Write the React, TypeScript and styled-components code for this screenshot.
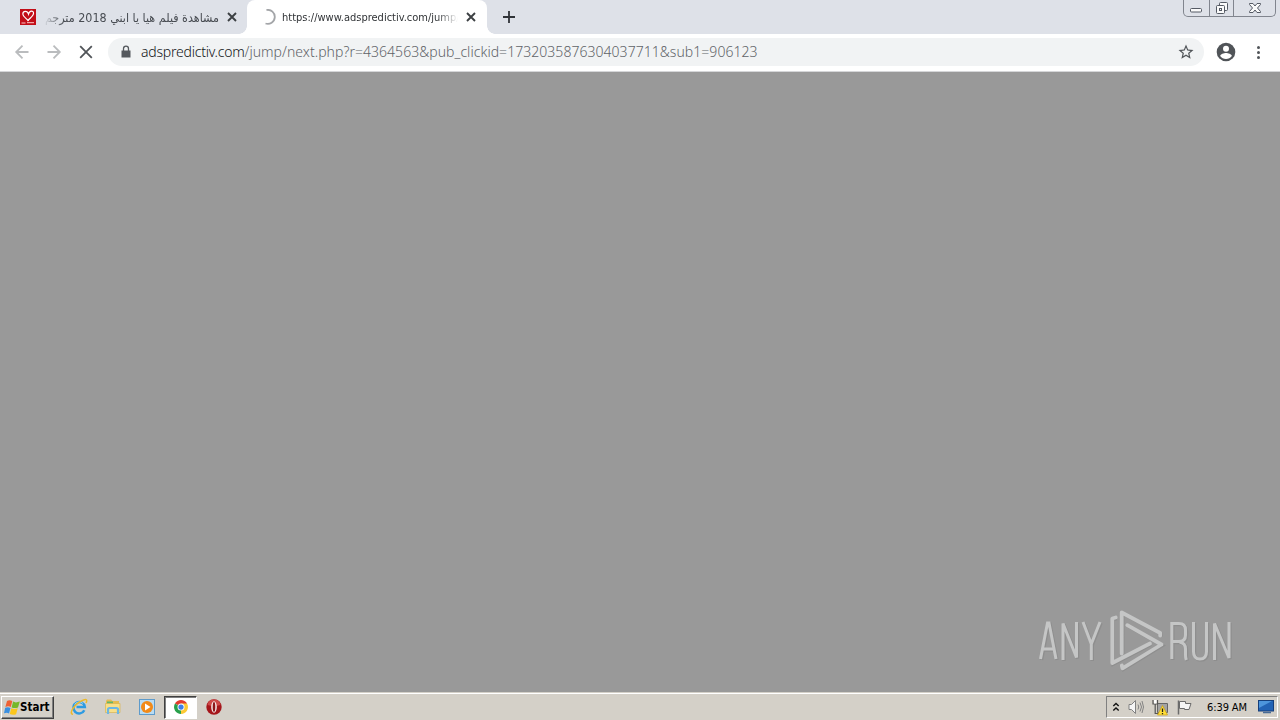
import React from 'react';
import styled, { createGlobalStyle } from 'styled-components';

const GlobalStyle = createGlobalStyle`
  * {
    box-sizing: border-box;
  }

  body {
    margin: 0;
    overflow: hidden;
    font-family: "DejaVu Sans Condensed", "DejaVu Sans", "Noto Sans", sans-serif;
  }

  svg {
    display: block;
    flex: none;
  }
`;

const Screen = styled.div`
  width: 1280px;
  height: 720px;
  display: flex;
  flex-direction: column;
  background: #999;
`;

// browser tabs
const TabStrip = styled.header`
  height: 34px;
  flex: none;
  display: flex;
  background: #dee1e8;
`;

const Tab = styled.div<{ $active?: boolean }>`
  position: relative;
  width: ${({ $active }) => ($active ? 240 : 247)}px;
  display: flex;
  align-items: center;
  padding-left: ${({ $active }) => ($active ? 13 : 20)}px;
  border-radius: 8px 8px 0 0;
  background: ${({ $active }) => ($active ? '#fff' : 'transparent')};

  &::before,
  &::after {
    content: '';
    display: ${({ $active }) => ($active ? 'block' : 'none')};
    position: absolute;
    bottom: 0;
    width: 8px;
    height: 8px;
  }

  &::before {
    left: -8px;
    background: radial-gradient(circle at 0 0, transparent 7.5px, #fff 8px);
  }

  &::after {
    right: -8px;
    background: radial-gradient(circle at 100% 0, transparent 7.5px, #fff 8px);
  }
`;

const TabTitle = styled.span<{ $rtl?: boolean }>`
  width: 176px;
  margin-left: ${({ $rtl }) => ($rtl ? 7 : 6)}px;
  padding-top: 1px;
  overflow: hidden;
  white-space: nowrap;
  direction: ${({ $rtl }) => ($rtl ? 'rtl' : 'ltr')};
  font-size: ${({ $rtl }) => ($rtl ? 12.4 : 11)}px;
  line-height: 18px;
  color: ${({ $rtl }) => ($rtl ? '#484c52' : '#303336')};
  mask-image: linear-gradient(
    to ${({ $rtl }) => ($rtl ? 'left' : 'right')},
    #000 88%,
    transparent
  );
`;

const TabClose = styled.span`
  margin-left: 8px;
`;

const NewTab = styled.span`
  display: flex;
  align-items: center;
  margin-left: 15px;
`;

const WindowButtons = styled.div`
  display: flex;
  width: 93px;
  height: 17px;
  margin: 0 4px 0 auto;
  border: 1px solid #81858e;
  border-top: 0;
  border-radius: 0 0 5px 5px;
`;

const WindowButton = styled.span<{ $width: number }>`
  width: ${({ $width }) => $width}px;
  display: flex;
  justify-content: center;
  align-items: center;

  & + & {
    border-left: 1px solid #81858e;
  }
`;

// address bar
const Toolbar = styled.nav`
  height: 38px;
  flex: none;
  display: flex;
  align-items: center;
  padding: 0 10px 1px 12px;
  background: #fff;
  border-bottom: 1px solid #d5d6d8;
`;

const NavButtons = styled.div`
  display: flex;
  gap: 12px;
`;

const Omnibox = styled.div`
  display: flex;
  align-items: center;
  width: 1096px;
  height: 28px;
  margin-left: 12px;
  padding: 0 9px 0 12px;
  border-radius: 14px;
  background: #f1f3f4;
`;

const Url = styled.span`
  margin-left: 9px;
  white-space: nowrap;
  font-family: "Noto Sans", "Open Sans", sans-serif;
  font-weight: 300;
  font-size: 14px;
  line-height: 20px;
  letter-spacing: 0.04px;
  color: #5f6368;

  b {
    font-weight: 300;
    letter-spacing: -0.22px;
    color: #111316;
  }
`;

const StarSlot = styled.span`
  margin-left: auto;
`;

const ToolbarEnd = styled.div`
  display: flex;
  align-items: center;
  gap: 12px;
  margin-left: 12px;
`;

const Page = styled.main`
  flex: 1;
  display: flex;
  justify-content: flex-end;
  align-items: flex-end;
  padding: 0 45px 17px 0;
`;

// taskbar
const Taskbar = styled.footer`
  height: 28px;
  flex: none;
  display: flex;
  align-items: center;
  padding: 1px 2px 0 1px;
  background: #d4d0c8;
  border-top: 1px solid #d4d0c8;
  box-shadow: inset 0 1px 0 #fff;
`;

const StartButton = styled.button`
  width: 53px;
  height: 23px;
  display: flex;
  align-items: center;
  gap: 0;
  padding: 0 0 0 2px;
  border: 1px solid;
  border-color: #fff #404040 #404040 #fff;
  box-shadow: inset -1px -1px 0 #808080;
  background: #d4d0c8;
  color: #000;
  font: bold 11.5px "DejaVu Sans Condensed", "DejaVu Sans", sans-serif;
`;

const QuickLaunch = styled.div`
  display: flex;
  align-items: center;
  margin-left: 8px;
`;

const TaskItem = styled.span<{ $pressed?: boolean }>`
  width: ${({ $pressed }) => ($pressed ? 33 : 34)}px;
  height: 23px;
  display: flex;
  align-items: center;
  justify-content: center;
  background: ${({ $pressed }) => ($pressed ? '#fff' : 'transparent')};
  border: ${({ $pressed }) => ($pressed ? '1px solid' : '0')};
  border-color: #404040 #fff #fff #404040;
  box-shadow: ${({ $pressed }) => ($pressed ? 'inset 1px 1px 0 #808080' : 'none')};
`;

const Tray = styled.div`
  display: flex;
  align-items: center;
  gap: 7px;
  width: 172px;
  height: 22px;
  margin-left: auto;
  padding-left: 5px;
  border: 1px solid;
  border-color: #808080 #fff #fff #808080;
`;

const Clock = styled.time`
  width: 43px;
  margin: 0 1px 0 8px;
  white-space: nowrap;
  font-size: 11px;
  letter-spacing: -0.1px;
  color: #000;
`;

const Cross = ({ size, width, color = '#3c4043' }: { size: number; width: number; color?: string }) => (
  <svg width={size} height={size} viewBox="0 0 10 10">
    <path d="M1 1l8 8M9 1L1 9" stroke={color} strokeWidth={width} />
  </svg>
);

const HeartFavicon = () => (
  <svg width="16" height="16" viewBox="0 0 16 16">
    <path fill="#c20e18" d="M0 0h16v16H0z" />
    <path
      d="M8.500 12C7 9.500 2.800 8 2.800 5C3 1.500 7.500 1.500 8.500 5C9.500 1.200 13.800 1.300 13.500 4.500C13.400 7 10 9 7.500 12"
      fill="none"
      stroke="#fff"
      strokeWidth="1.2"
    />
    <path d="M1.500 14h4M7 13.700h7" stroke="#ffc8c8" strokeWidth="1" />
  </svg>
);

const Spinner = () => (
  <svg width="16" height="16" viewBox="0 0 16 16">
    <path d="M6.500 1A7 7 0 1 1 5.500 14.500" fill="none" stroke="#a3a5a8" strokeWidth="1.8" />
  </svg>
);

const Arrow = ({ forward }: { forward?: boolean }) => (
  <svg width="20" height="20" viewBox="0 0 20 20">
    <path
      d={forward ? 'M3.500 10h12M9.500 3.700l6.300 6.300l-6.300 6.300' : 'M16.500 10h-12M10.500 3.700L4.200 10l6.300 6.300'}
      fill="none"
      stroke="#babcbe"
      strokeWidth="1.8"
    />
  </svg>
);

const StopIcon = () => (
  <svg width="20" height="20" viewBox="0 0 20 20">
    <path d="M4.200 4.200l11.600 11.600M15.800 4.200L4.200 15.800" stroke="#505458" strokeWidth="1.8" />
  </svg>
);

const LockIcon = () => (
  <svg width="12" height="14" viewBox="0 0 12 14">
    <path d="M1.500 5.500h9v7h-9z" fill="#55595e" />
    <path d="M3.500 6V3.700a2.500 2.500 0 0 1 5 0V6" fill="none" stroke="#55595e" strokeWidth="1.300" />
  </svg>
);

const StarIcon = () => (
  <svg width="18" height="18" viewBox="0 0 24 24">
    <path
      fill="#505458"
      d="M22 9.240l-7.190-.62L12 2 9.190 8.630 2 9.240l5.460 4.730L5.820 21 12 17.270 18.180 21l-1.630-7.030L22 9.240zM12 15.400l-3.760 2.270 1-4.280-3.320-2.880 4.380-.38L12 6.100l1.710 4.040 4.380.38-3.320 2.880 1 4.280L12 15.400z"
    />
  </svg>
);

const ProfileIcon = () => (
  <svg width="20" height="20" viewBox="0 0 20 20">
    <circle cx="10" cy="10" r="9.300" fill="#505458" />
    <circle cx="10" cy="6.800" r="3" fill="#fff" />
    <path d="M4.200 14C4.300 11.900 8 11 10 11s5.700.9 5.800 3C14.500 16 12.400 17 10 17s-4.500-1-5.800-3Z" fill="#fff" />
  </svg>
);

const MenuDots = () => (
  <svg width="20" height="20" viewBox="0 0 20 20" fill="#505458">
    <circle cx="10.500" cy="5.500" r="1.500" />
    <circle cx="10.500" cy="10.500" r="1.500" />
    <circle cx="10.500" cy="15.500" r="1.500" />
  </svg>
);

const WindowGlyph = ({ kind }: { kind: 'min' | 'restore' | 'close' }) => (
  <svg width="14" height="16" viewBox="0 0 14 16" fill="#fafafa" stroke="#555a64">
    {kind === 'min' && <rect x="1.500" y="8.500" width="11" height="3.500" rx="1" />}
    {kind === 'restore' && (
      <>
        <rect x="4.500" y="2.500" width="8" height="8" rx="1" />
        <rect x="1.500" y="5.500" width="8" height="8" rx="1" />
        <rect x="4.500" y="8.500" width="2" height="2" />
      </>
    )}
    {kind === 'close' && (
      <path d="M1.500 3.500H5L7 6l2-2.500h3.500v1L9.500 8l3 3.500v1H9L7 10l-2 2.500H1.500v-1l3-3.500l-3-3.500Z" strokeLinejoin="round" />
    )}
  </svg>
);

const WindowsFlag = () => (
  <svg width="16" height="17" viewBox="0 0 16 17">
    <path d="M3 2Q5.500 .5 8.300 2L6.800 8Q4.300 6.700 1.400 8Z" fill="#ee6134" />
    <path d="M9.100 2.600Q11.500 4.200 15.800 2.600L14 8.400Q10.800 9.800 7.600 8.400Z" fill="#76b82a" />
    <path d="M1.200 8.700Q4 7.600 6.500 9L5 14.500Q3 13 0 14.300Z" fill="#3a8fe0" />
    <path d="M7.300 9.300Q10.500 10.800 13.700 9.300L12.100 15.200Q9 16.500 5.800 15Z" fill="#fbc61b" />
  </svg>
);

const ExplorerIcon = () => (
  <svg width="18" height="18" viewBox="0 0 18 18" fill="none">
    <path d="M14.300 12.200A5.700 5.700 0 1 1 14.800 9H6.500" stroke="#2d9be2" strokeWidth="2.500" />
    <path d="M4.500 6.500A5.500 5.500 0 0 1 13 5.500" stroke="#8fd4f8" strokeWidth="1" />
    <path d="M3 16.300C-2 16 5 5 13.500 2C16.500.7 17.500 2 16 5" stroke="#edb928" strokeWidth="1.500" />
  </svg>
);

const FolderIcon = () => (
  <svg width="18" height="18" viewBox="0 0 18 18">
    <path d="M2 3l1-1.500h4L8.500 3H15v9H2z" fill="#e6bc50" />
    <path d="M3 3.500h6v3H3z" fill="#62b669" />
    <path d="M1.500 5.500H16v9H1.500z" fill="#f8df88" stroke="#d9b452" strokeWidth=".7" />
    <path d="M4 16v-4.500q0-1.500 1.500-1.500h7q1.500 0 1.500 1.500V16" fill="none" stroke="#6bb7e5" strokeWidth="2.200" />
  </svg>
);

const MediaIcon = () => (
  <svg width="16" height="16" viewBox="0 0 16 16">
    <rect x=".5" y=".5" width="15" height="15" fill="#b9dcf3" stroke="#5e9bcb" />
    <circle cx="8" cy="8" r="6" fill="#f28a18" />
    <path d="M6 4.500L11.500 8L6 11.500Z" fill="#fff" />
  </svg>
);

const ChromeIcon = () => (
  <svg width="14" height="14" viewBox="0 0 16 16">
    <path d="M8 8L1.100 4A8 8 0 0 1 14.900 4Z" fill="#e33b2e" />
    <path d="M8 8L14.900 4A8 8 0 0 1 8 16Z" fill="#fcc934" />
    <path d="M8 8V16A8 8 0 0 1 1.100 4Z" fill="#28a04b" />
    <path d="M8 4h6.900L11 10Z" fill="#fcc934" />
    <circle cx="8" cy="8" r="4" fill="#fff" />
    <circle cx="8" cy="8" r="3" fill="#3f7fe8" />
  </svg>
);

const OperaIcon = () => (
  <svg width="16" height="16" viewBox="0 0 16 16">
    <circle cx="8" cy="8" r="7.700" fill="#a5161b" />
    <path d="M1.500 6a6.600 6.600 0 0 1 13 0Q8 8 1.500 6Z" fill="#cf4848" />
    <ellipse cx="8" cy="8" rx="2.800" ry="5.700" fill="#f8eeee" />
    <ellipse cx="8" cy="8" rx="1.300" ry="4.900" fill="#8d1519" />
  </svg>
);

const Chevrons = () => (
  <svg width="8" height="11" viewBox="0 0 8 11" fill="none" stroke="#111" strokeWidth="1.400">
    <path d="M1.300 4L4 1.500L6.700 4M1.300 8.500L4 6l2.700 2.500" />
  </svg>
);

const VolumeIcon = () => (
  <svg width="17" height="16" viewBox="0 0 17 16" fill="none" stroke="#818181">
    <path d="M2 5.500h2.500l4-4v13l-4-4H2Z" fill="#f5f5f5" />
    <path d="M11 5.500q1.500 2.500 0 5M13 3.500q3 4.500 0 9M15 2q3 6 0 12" />
  </svg>
);

const NetworkIcon = () => (
  <svg width="17" height="17" viewBox="0 0 17 17">
    <path d="M6.500 4.500h10v9h-10z" fill="#a4a4a4" stroke="#666" />
    <path d="M2 1v4h4.500V1M4.200 5v9.500h4" fill="none" stroke="#555" strokeWidth="1.200" />
    <path d="M3 1h2.500v3.500H3z" fill="#fff" />
    <path d="M11.500 6.500l5 9.500h-10Z" fill="#ffde36" stroke="#c99f12" strokeWidth=".7" />
    <path d="M11.500 9.500v3.500M11.500 14v1.200" stroke="#222" strokeWidth="1.300" />
  </svg>
);

const FlagIcon = () => (
  <svg width="17" height="17" viewBox="0 0 17 17" stroke="#6b6b6b">
    <path d="M3.500 1.500v14" strokeWidth="1.500" />
    <path d="M4.500 2.500h6v2h5.500l-2 6H9.500v-1h-5Z" fill="#f5f5f5" />
  </svg>
);

const DesktopIcon = () => (
  <svg width="16" height="14" viewBox="0 0 16 14">
    <rect x=".5" y=".5" width="15" height="10.500" fill="#2363b5" stroke="#163f7b" />
    <path d="M1 1h13L1 8Z" fill="#4d95dc" />
    <path d="M5 12.500h8" stroke="#486b96" strokeWidth="1.500" />
  </svg>
);

const LETTER_STROKES = [
  'M5.500 52L12.500 16h1.500L21 52M8.500 42h10.500M28 53V16.500l13.500 34V15M48 15l8.300 22v16M65 15l-8.700 22',
  'M136.800 52V16.500h7.200q6.500 0 6.500 6.500v5q0 6.500-6.500 6.500h-7M144.500 35q6 1 6 7v6q0 3 .8 5M158.500 15v29.500q0 7.500 6.500 7.500t6.500-7.500V15M179.500 53V16.500L194 51V15',
];

const LOGO_STROKES = [
  'M80.700 10.500L77.300 11.500V56L115 36.500',
  'M86.700 46.500V5.500L125.200 26V28.500',
  'M92.300 18.200L126.500 37.500L87.500 61.300L86.800 58.500',
];

const Watermark = () => (
  <svg width="200" height="68" viewBox="0 0 200 68" fill="none">
    <g stroke="#808080" strokeWidth="3.500" opacity=".4" transform="translate(1 1)">
      {[...LETTER_STROKES, ...LOGO_STROKES].map((d) => <path key={d} d={d} />)}
    </g>
    <g stroke="#c5c6c6" strokeWidth="3">
      {LETTER_STROKES.map((d) => <path key={d} d={d} />)}
    </g>
    <g stroke="#c5c6c6" strokeWidth="3.800" strokeLinecap="round" strokeLinejoin="round">
      {LOGO_STROKES.map((d) => <path key={d} d={d} />)}
    </g>
  </svg>
);

const App: React.FC = () => {
  return (
    <Screen>
      <GlobalStyle />
      <TabStrip>
        <Tab>
          <HeartFavicon />
          <TabTitle $rtl>مشاهدة فيلم هيا يا ابني 2018 مترجم</TabTitle>
          <TabClose><Cross size={10} width={1.9} /></TabClose>
        </Tab>
        <Tab $active>
          <Spinner />
          <TabTitle>https://www.adspredictiv.com/jump/</TabTitle>
          <TabClose><Cross size={10} width={1.9} /></TabClose>
        </Tab>
        <NewTab>
          <svg width="14" height="14" viewBox="0 0 14 14">
            <path d="M7 1v12M1 7h12" stroke="#303338" strokeWidth="1.800" />
          </svg>
        </NewTab>
        <WindowButtons>
          <WindowButton $width={25}><WindowGlyph kind="min" /></WindowButton>
          <WindowButton $width={25}><WindowGlyph kind="restore" /></WindowButton>
          <WindowButton $width={42}><WindowGlyph kind="close" /></WindowButton>
        </WindowButtons>
      </TabStrip>

      <Toolbar>
        <NavButtons>
          <Arrow />
          <Arrow forward />
          <StopIcon />
        </NavButtons>
        <Omnibox>
          <LockIcon />
          <Url>
            <b>adspredictiv.com</b>/jump/next.php?r=4364563&amp;pub_clickid=1732035876304037711&amp;sub1=906123
          </Url>
          <StarSlot><StarIcon /></StarSlot>
        </Omnibox>
        <ToolbarEnd>
          <ProfileIcon />
          <MenuDots />
        </ToolbarEnd>
      </Toolbar>

      <Page>
        <Watermark />
      </Page>

      <Taskbar>
        <StartButton>
          <WindowsFlag />
          Start
        </StartButton>
        <QuickLaunch>
          <TaskItem><ExplorerIcon /></TaskItem>
          <TaskItem><FolderIcon /></TaskItem>
          <TaskItem><MediaIcon /></TaskItem>
          <TaskItem $pressed><ChromeIcon /></TaskItem>
          <TaskItem><OperaIcon /></TaskItem>
        </QuickLaunch>
        <Tray>
          <Chevrons />
          <VolumeIcon />
          <NetworkIcon />
          <FlagIcon />
          <Clock>6:39 AM</Clock>
          <DesktopIcon />
        </Tray>
      </Taskbar>
    </Screen>
  );
};

export default App;
